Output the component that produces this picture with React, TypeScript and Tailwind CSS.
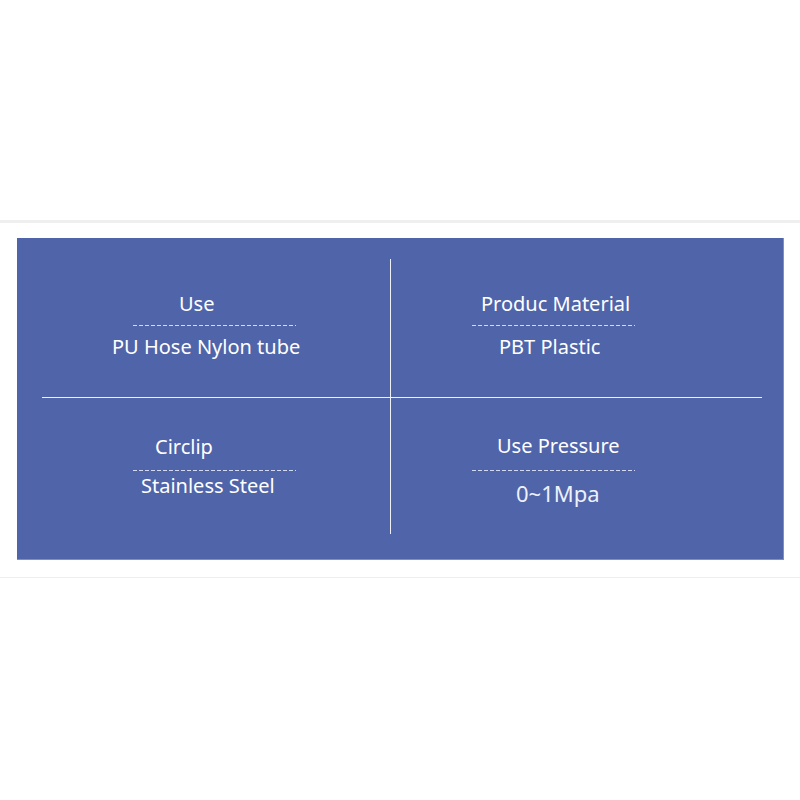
const Dash = ({ ml }: { ml: string }) => (
  <div
    className={`${ml} h-px w-[163px] bg-[repeating-linear-gradient(90deg,#d3d9f0_0_4px,transparent_4px_6px)]`}
  />
);

const App = () => {
  return (
    <div className="min-h-[800px] bg-white pt-[220px] font-['Noto_Sans',sans-serif] text-white">
      <div className="h-[3px] bg-[#efefef]" />

      {/* Spec panel */}
      <div className="ml-[17px] mt-[15px] h-[322px] w-[767px] border-r border-b border-[#7d8ec8] bg-[#5065a9] pl-[25px] pt-[21px]">
        {/* Top row */}
        <div className="flex h-[138px]">
          <div className="flex w-[348px] flex-col items-start pt-[33px]">
            <span className="ml-[137px] text-[20px] leading-[24px]">Use</span>
            <Dash ml="ml-[91px] mt-[9px]" />
            <span className="ml-[70px] mt-[9px] text-[20px] leading-[24px]">PU Hose Nylon tube</span>
          </div>
          <div className="w-px bg-[#eef1fa]" />
          <div className="flex w-[371px] flex-col items-start pt-[33px]">
            <span className="ml-[90px] text-[20px] leading-[24px]">Produc Material</span>
            <Dash ml="ml-[81px] mt-[9px]" />
            <span className="ml-[108px] mt-[9px] text-[20px] leading-[24px]">PBT Plastic</span>
          </div>
        </div>

        <div className="h-px w-[720px] bg-[#eef1fa]" />

        {/* Bottom row */}
        <div className="flex h-[136px]">
          <div className="flex w-[348px] flex-col items-start pt-[37px]">
            <span className="ml-[113px] text-[20px] leading-[24px]">Circlip</span>
            <Dash ml="ml-[91px] mt-[11px]" />
            <span className="ml-[99px] mt-[3px] text-[20px] leading-[24px]">Stainless Steel</span>
          </div>
          <div className="w-px bg-[#eef1fa]" />
          <div className="flex w-[371px] flex-col items-start pt-[36px]">
            <span className="ml-[106px] text-[20px] leading-[24px]">Use Pressure</span>
            <Dash ml="ml-[81px] mt-[12px]" />
            <span className="ml-[125px] mt-[9px] text-[22px] leading-[26px] text-[#eef1fa]">0~1Mpa</span>
          </div>
        </div>
      </div>

      <div className="mt-[17px] h-px bg-[#eeeeee]" />
    </div>
  );
};

export default App;
